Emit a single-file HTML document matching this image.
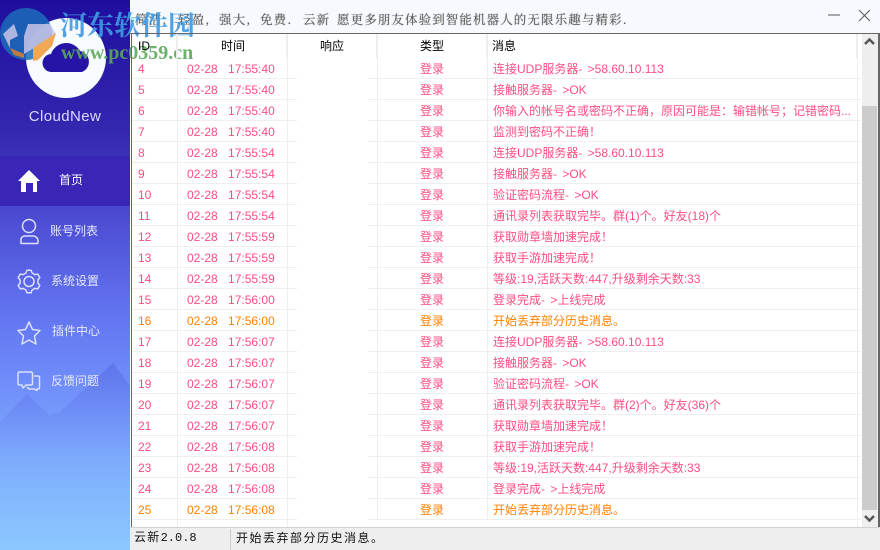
<!DOCTYPE html>
<html><head><meta charset="utf-8"><style>
html,body{margin:0;padding:0;width:880px;height:550px;overflow:hidden;background:#fff}
body{position:relative;font:12px/21px "Liberation Sans","WenQuanYi Zen Hei","Noto Sans CJK SC",sans-serif;color:#ff4d80}
div,span{position:absolute;white-space:nowrap}
#side{left:0;top:0;width:130px;height:550px;background:linear-gradient(180deg,#1f0e9e 0,#3427b0 24%,#4a48cf 38%,#6070ee 55%,#7292fb 72%,#82b4fd 88%,#8cc8ff 100%);overflow:hidden}
#top{left:130px;top:0;width:750px;height:33px;background:#f6faff}
.r{left:132px;width:729px;height:21px;border-bottom:1px solid #eee;box-sizing:border-box}
.gap{left:165px;top:0;width:71px;height:21px;background:#fff}
.v{top:0;width:1px;height:21px;background:#eee}
.v1{left:45px}.v2{left:155px}.v3{left:245px}.v4{left:355px}
.i{left:6px;top:1px}.t{left:55px;top:1px;word-spacing:7px}.y{left:288px;top:1px}.m{left:361px;top:1px;word-spacing:2px}
.o{color:#ff8000}
.h{top:35px;color:#000;line-height:22px}
.hv{top:34px;width:2px;height:24px;background:#eee}
.n{color:#e6e8ff;font-size:12px;line-height:20px}
.w{top:8px;color:#5f5a50;font:12.500px/22px 'Noto Serif CJK SC',serif;letter-spacing:1.100px;text-shadow:0 0 1px #8a94a0}
b{font-weight:normal}
</style></head><body>
<div id="side">
<svg width="130" height="550" style="position:absolute;left:0;top:0">
<defs>
<linearGradient id="a" x1="0" y1="0" x2="0" y2="1"><stop offset="0" stop-color="#5f74ea"/><stop offset="1" stop-color="#6f90f8" stop-opacity="0"/></linearGradient>
</defs>
<polygon points="0,422 27,394 49,415 60,412 113,363 130,386 130,455 0,455" fill="url(#a)"/>
<rect x="0" y="156" width="130" height="50" fill="#3a26b6"/>
<circle cx="66" cy="58" r="40" fill="#f7faff"/>
<path d="M52 72a9 9 0 0 1-1-18a16 16 0 0 1 29-3a11 11 0 0 1 2 21z" fill="#2614a6"/>
<path fill-rule="evenodd" d="M29 170L40 181L37 181L37 192L21 192L21 181L18 181Z M26 183L26 192L33 192L33 183Z" fill="#fff"/>
<g fill="none" stroke="#dbe0ff" stroke-width="1.500" stroke-linejoin="round">
<circle cx="29" cy="226" r="6.500"/>
<path d="M21 241a4 4 0 0 1 4-5h8a5 5 0 0 1 5 5v1.500q0 1-1 1h-15.500q-1 0-.5-1z"/>
<path d="M27 270.200L31 270.200L32.100 273L34.800 274.600L37.800 274.100L39.800 277.600L37.900 279.900L37.900 283.100L39.800 285.400L37.800 288.900L34.800 288.400L32.100 290L31 292.800L27 292.800L25.900 290L23.200 288.400L20.200 288.900L18.200 285.400L20.100 283.100L20.100 279.900L18.200 277.600L20.200 274.100L23.200 274.600L25.900 273Z"/>
<circle cx="29" cy="281.500" r="5"/>
<path d="M29 322l3.500 7.500 7.500 1-5.500 5.500 1.500 8-7-4-7 4 1.500-8-5.500-5.500 7.500-1z"/>
<path d="M20 372h11q1.500 0 1.500 1.500v10q0 1.500-1.500 1.500h-5l-3 3-1-3h-2.500q-1.500 0-1.500-1.500v-10q0-1.500 1.500-1.500z"/>
<path d="M34 376h4q1.500 0 1.500 1.500v10q0 1.500-1.500 1.500h-1v1.500l-3-1.500h-5l-2-2"/>
</g>
</svg>
<div style="left:0;width:130px;top:107px;text-align:center;color:#d8dcff;font-size:15px;line-height:20px;letter-spacing:.4px">CloudNew</div>
<div class="n" style="left:59px;top:170px;color:#fff">首页</div>
<div class="n" style="left:50px;top:221px">账号列表</div>
<div class="n" style="left:51px;top:271px">系统设置</div>
<div class="n" style="left:52px;top:321px">插件中心</div>
<div class="n" style="left:51px;top:371px">反馈问题</div>
</div>
<svg width="60" height="64" style="position:absolute;left:0;top:4px">
<circle cx="26" cy="30" r="26" fill="#1b6cb8" opacity=".85"/>
<path d="M3 30L14 20L18 32L10 36L10 44L24 50L24 32L28 20L50 20L56 30L34 44L24 50L10 44Z" fill="#c8c4e8" opacity=".85"/>
<path d="M10 44L24 50L24 54L14 51Z" fill="#c07a40"/>
<path d="M33 44L56 29L52 42L38 56L33 57Z" fill="#f0a855"/>
</svg>
<div id="top"></div>
<div class="w" style="left:135px">简洁,</div>
<div class="w" style="left:178px">轻盈,</div>
<div class="w" style="left:219px">强大,</div>
<div class="w" style="left:260px">免费.</div>
<div class="w" style="left:303px">云新</div>
<div class="w" style="left:337px;letter-spacing:1.100px">愿更多朋友体验到智能机器人的无限乐趣与精彩.</div>
<div style="left:60px;top:9px;color:#3f9ae2;opacity:.92;font:bold 27px/30px 'Noto Serif CJK SC',serif">河东软件园</div>
<div style="left:61px;top:42px;color:#5ca95c;opacity:.9;font:bold 20px/22px 'Liberation Serif',serif">www.pc0359.cn</div>
<svg width="60" height="30" style="position:absolute;left:820px;top:2px"><path d="M8 13h12" stroke="#555" stroke-width="1"/><path d="M39 8l11 11M50 8L39 19" stroke="#555" stroke-width="1" fill="none"/></svg>
<div style="left:130px;top:33px;width:750px;height:1px;background:#666"></div>
<div style="left:131px;top:33px;width:1px;height:494px;background:#666"></div>
<div style="left:878px;top:33px;width:1.500px;height:494px;background:#666"></div>
<div class="h" style="left:138px">ID</div>
<div class="h" style="left:221px">时间</div>
<div class="h" style="left:320px">响应</div>
<div class="h" style="left:420px">类型</div>
<div class="h" style="left:492px">消息</div>
<div class="hv" style="left:176px"></div><div class="hv" style="left:286px"></div><div class="hv" style="left:376px"></div><div class="hv" style="left:486px"></div><div class="hv" style="left:856px"></div>
<div class="r" style="top:58px"><div class="v v1"></div><div class="v v2"></div><div class="v v3"></div><div class="v v4"></div><div class="gap"></div><span class="i">4</span><span class="t">02-28 17:55:40</span><span class="y">登录</span><span class="m">连接UDP服务器- &gt;58.60.10.113</span></div>
<div class="r" style="top:79px"><div class="v v1"></div><div class="v v2"></div><div class="v v3"></div><div class="v v4"></div><div class="gap"></div><span class="i">5</span><span class="t">02-28 17:55:40</span><span class="y">登录</span><span class="m">接触服务器- &gt;OK</span></div>
<div class="r" style="top:100px"><div class="v v1"></div><div class="v v2"></div><div class="v v3"></div><div class="v v4"></div><div class="gap"></div><span class="i">6</span><span class="t">02-28 17:55:40</span><span class="y">登录</span><span class="m">你输入的帐号名或密码不正确，原因可能是：输错帐号；记错密码...</span></div>
<div class="r" style="top:121px"><div class="v v1"></div><div class="v v2"></div><div class="v v3"></div><div class="v v4"></div><div class="gap"></div><span class="i">7</span><span class="t">02-28 17:55:40</span><span class="y">登录</span><span class="m">监测到密码不正确！</span></div>
<div class="r" style="top:142px"><div class="v v1"></div><div class="v v2"></div><div class="v v3"></div><div class="v v4"></div><div class="gap"></div><span class="i">8</span><span class="t">02-28 17:55:54</span><span class="y">登录</span><span class="m">连接UDP服务器- &gt;58.60.10.113</span></div>
<div class="r" style="top:163px"><div class="v v1"></div><div class="v v2"></div><div class="v v3"></div><div class="v v4"></div><div class="gap"></div><span class="i">9</span><span class="t">02-28 17:55:54</span><span class="y">登录</span><span class="m">接触服务器- &gt;OK</span></div>
<div class="r" style="top:184px"><div class="v v1"></div><div class="v v2"></div><div class="v v3"></div><div class="v v4"></div><div class="gap"></div><span class="i">10</span><span class="t">02-28 17:55:54</span><span class="y">登录</span><span class="m">验证密码流程- &gt;OK</span></div>
<div class="r" style="top:205px"><div class="v v1"></div><div class="v v2"></div><div class="v v3"></div><div class="v v4"></div><div class="gap"></div><span class="i">11</span><span class="t">02-28 17:55:54</span><span class="y">登录</span><span class="m">通讯录列表获取完毕。群(1)个。好友(18)个</span></div>
<div class="r" style="top:226px"><div class="v v1"></div><div class="v v2"></div><div class="v v3"></div><div class="v v4"></div><div class="gap"></div><span class="i">12</span><span class="t">02-28 17:55:59</span><span class="y">登录</span><span class="m">获取勋章墙加速完成！</span></div>
<div class="r" style="top:247px"><div class="v v1"></div><div class="v v2"></div><div class="v v3"></div><div class="v v4"></div><div class="gap"></div><span class="i">13</span><span class="t">02-28 17:55:59</span><span class="y">登录</span><span class="m">获取手游加速完成！</span></div>
<div class="r" style="top:268px"><div class="v v1"></div><div class="v v2"></div><div class="v v3"></div><div class="v v4"></div><div class="gap"></div><span class="i">14</span><span class="t">02-28 17:55:59</span><span class="y">登录</span><span class="m">等级:19,活跃天数:447,升级剩余天数:33</span></div>
<div class="r" style="top:289px"><div class="v v1"></div><div class="v v2"></div><div class="v v3"></div><div class="v v4"></div><div class="gap"></div><span class="i">15</span><span class="t">02-28 17:56:00</span><span class="y">登录</span><span class="m">登录完成- &gt;上线完成</span></div>
<div class="r o" style="top:310px"><div class="v v1"></div><div class="v v2"></div><div class="v v3"></div><div class="v v4"></div><div class="gap"></div><span class="i">16</span><span class="t">02-28 17:56:00</span><span class="y">登录</span><span class="m">开始丢弃部分历史消息。</span></div>
<div class="r" style="top:331px"><div class="v v1"></div><div class="v v2"></div><div class="v v3"></div><div class="v v4"></div><div class="gap"></div><span class="i">17</span><span class="t">02-28 17:56:07</span><span class="y">登录</span><span class="m">连接UDP服务器- &gt;58.60.10.113</span></div>
<div class="r" style="top:352px"><div class="v v1"></div><div class="v v2"></div><div class="v v3"></div><div class="v v4"></div><div class="gap"></div><span class="i">18</span><span class="t">02-28 17:56:07</span><span class="y">登录</span><span class="m">接触服务器- &gt;OK</span></div>
<div class="r" style="top:373px"><div class="v v1"></div><div class="v v2"></div><div class="v v3"></div><div class="v v4"></div><div class="gap"></div><span class="i">19</span><span class="t">02-28 17:56:07</span><span class="y">登录</span><span class="m">验证密码流程- &gt;OK</span></div>
<div class="r" style="top:394px"><div class="v v1"></div><div class="v v2"></div><div class="v v3"></div><div class="v v4"></div><div class="gap"></div><span class="i">20</span><span class="t">02-28 17:56:07</span><span class="y">登录</span><span class="m">通讯录列表获取完毕。群(2)个。好友(36)个</span></div>
<div class="r" style="top:415px"><div class="v v1"></div><div class="v v2"></div><div class="v v3"></div><div class="v v4"></div><div class="gap"></div><span class="i">21</span><span class="t">02-28 17:56:07</span><span class="y">登录</span><span class="m">获取勋章墙加速完成！</span></div>
<div class="r" style="top:436px"><div class="v v1"></div><div class="v v2"></div><div class="v v3"></div><div class="v v4"></div><div class="gap"></div><span class="i">22</span><span class="t">02-28 17:56:08</span><span class="y">登录</span><span class="m">获取手游加速完成！</span></div>
<div class="r" style="top:457px"><div class="v v1"></div><div class="v v2"></div><div class="v v3"></div><div class="v v4"></div><div class="gap"></div><span class="i">23</span><span class="t">02-28 17:56:08</span><span class="y">登录</span><span class="m">等级:19,活跃天数:447,升级剩余天数:33</span></div>
<div class="r" style="top:478px"><div class="v v1"></div><div class="v v2"></div><div class="v v3"></div><div class="v v4"></div><div class="gap"></div><span class="i">24</span><span class="t">02-28 17:56:08</span><span class="y">登录</span><span class="m">登录完成- &gt;上线完成</span></div>
<div class="r o" style="top:499px"><div class="v v1"></div><div class="v v2"></div><div class="v v3"></div><div class="v v4"></div><div class="gap"></div><span class="i">25</span><span class="t">02-28 17:56:08</span><span class="y">登录</span><span class="m">开始丢弃部分历史消息。</span></div>
<div style="left:177px;top:520px;width:1px;height:7px;background:#eee"></div>
<div style="left:287px;top:520px;width:1px;height:7px;background:#eee"></div>
<div style="left:857px;top:58px;width:1px;height:469px;background:#eee"></div>
<div style="left:862px;top:34px;width:16px;height:493px;background:#eee"></div>
<div style="left:862px;top:106px;width:15px;height:404px;background:#ccc"></div>
<svg width="16" height="493" style="position:absolute;left:862px;top:34px"><path d="M3 10L7.500 5.500L12 10" fill="none" stroke="#555" stroke-width="2.500"/><path d="M3 482L7.500 486.500L12 482" fill="none" stroke="#555" stroke-width="2.500"/></svg>
<div style="left:130px;top:527px;width:750px;height:23px;background:#eee;border-top:1px solid #d2d2d2;box-sizing:border-box"></div>
<div style="left:230px;top:529px;width:1px;height:21px;background:#ccc"></div>
<div style="left:134px;top:528px;color:#111;font:12px/20px 'WenQuanYi Zen Hei','Liberation Mono',monospace;letter-spacing:1.300px">云新<b style="letter-spacing:0">2.0.8</b></div>
<div style="left:236px;top:528px;color:#111;font:12px/20px 'WenQuanYi Zen Hei','Noto Sans CJK SC',sans-serif;letter-spacing:1.500px">开始丢弃部分历史消息。</div>
</body></html>
